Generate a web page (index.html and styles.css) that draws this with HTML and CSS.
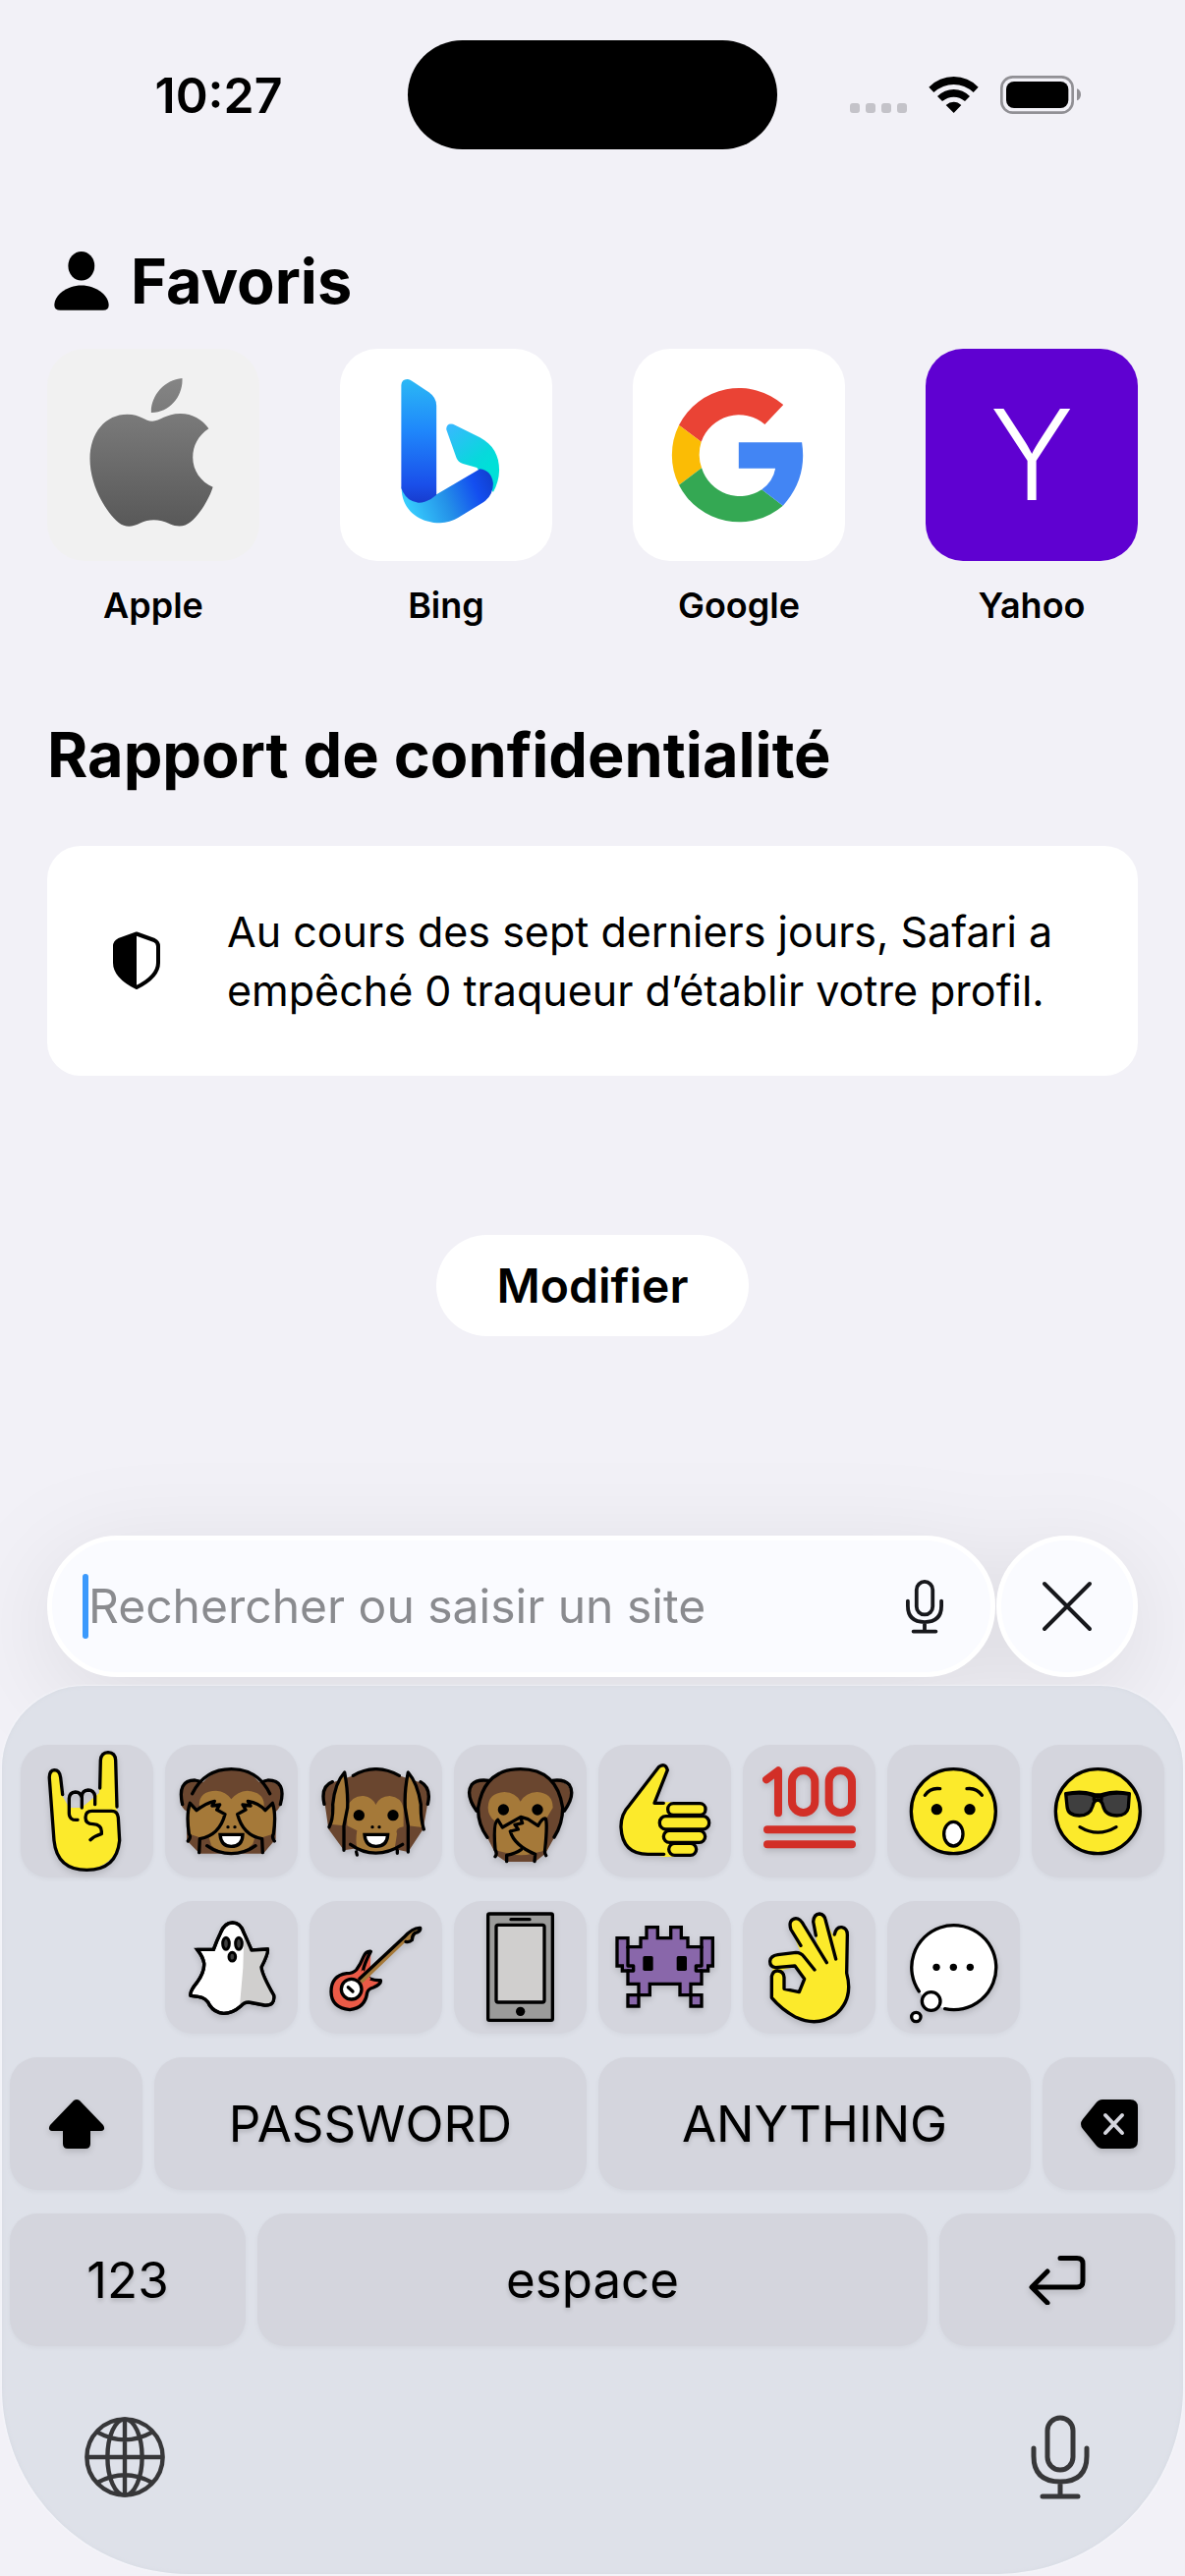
FILE: index.html
```html
<!DOCTYPE html>
<html lang="fr">
<head>
<meta charset="utf-8">
<meta name="viewport" content="width=device-width, initial-scale=1">
<title>Page de démarrage</title>
<link rel="stylesheet" href="styles.css">
</head>
<body>
<header class="status">
  <time class="status-time">10:27</time>
  <div class="island"></div>
  <svg class="status-icons" viewBox="45 51 705 123" aria-hidden="true">
    <g fill="#c4c3c9"><rect x="45" y="138" width="30" height="30" rx="9"/><rect x="93" y="138" width="30" height="30" rx="9"/><rect x="141" y="138" width="30" height="30" rx="9"/><rect x="189" y="138" width="30" height="30" rx="9"/></g>
    <path d="M286 89Q318 57 362 57T437 89L422 105Q395 81 362 81T301 105ZM312 117Q334 96 362 96T411 117L396 132Q380 119 362 119T327 132ZM338 144Q349 134 362 134T385 144L362 168Z"/>
    <rect x="508" y="58" width="217" height="109" rx="34" fill="none" stroke="#919095" stroke-width="8"/>
    <rect x="522" y="72" width="190" height="81" rx="24"/>
    <path d="M738 94Q750 98 750 112T738 130Z" fill="#919095"/>
  </svg>
</header>

<main class="start">
  <section>
    <h1 class="title"><svg class="person" viewBox="47 32 167 180" aria-hidden="true"><ellipse cx="130" cy="76" rx="40" ry="44"/><path d="M66 210Q48 210 48 195C48 165 85 135 130 135S213 165 213 195Q213 210 196 210Z"/></svg>Favoris</h1>
    <nav class="favorites">
      <a class="favorite" href="#apple">
        <svg class="tile tile-apple" viewBox="126 44 561 648" preserveAspectRatio="none" aria-hidden="true">
          <defs><linearGradient id="gray" x1="0" y1="134" x2="0" y2="588" gradientUnits="userSpaceOnUse"><stop offset="0" stop-color="#858585"/><stop offset="1" stop-color="#585858"/></linearGradient></defs>
          <path fill="url(#gray)" d="M401 239C399 190 435 138 483 134C486 188 450 240 401 239ZM404 265C424 265 440 242 478 242C510 242 537 260 553 288C525 310 511 340 511 376C511 415 532 450 564 466C555 500 530 550 505 573C490 588 470 589 450 579C425 564 395 563 373 576C350 590 332 590 315 575C275 535 239 455 239 380C239 300 280 244 338 244C372 244 385 265 404 265Z"/>
        </svg>
        <span>Apple</span>
      </a>
      <a class="favorite" href="#bing">
        <svg class="tile tile-white" viewBox="900 44 561 648" preserveAspectRatio="none" aria-hidden="true">
          <defs>
            <linearGradient id="bar" x1="0" y1="137" x2="0" y2="513" gradientUnits="userSpaceOnUse"><stop offset="0" stop-color="#2bb8f5"/><stop offset=".42" stop-color="#1f87fb"/><stop offset=".85" stop-color="#1a50ea"/><stop offset="1" stop-color="#173ccf"/></linearGradient>
            <linearGradient id="low" x1="1070" y1="530" x2="1305" y2="450" gradientUnits="userSpaceOnUse"><stop offset="0" stop-color="#38d2ff"/><stop offset=".45" stop-color="#2490e8"/><stop offset=".8" stop-color="#134ef0"/><stop offset="1" stop-color="#1140d0"/></linearGradient>
            <linearGradient id="cyan" x1="1185" y1="280" x2="1300" y2="400" gradientUnits="userSpaceOnUse"><stop offset="0" stop-color="#38b8ff"/><stop offset=".75" stop-color="#08d8dc"/><stop offset="1" stop-color="#00e0d8"/></linearGradient>
          </defs>
          <path fill="url(#cyan)" d="M1181 290Q1181 270 1199 274L1270 315C1305 337 1321 370 1321 415Q1320 450 1305 482L1262 407L1225 395Q1212 390 1208 378Z"/>
          <path fill="url(#low)" d="M1063 465C1060 530 1105 576 1165 576Q1190 575 1212 560L1280 512Q1305 492 1305 455Q1300 415 1270 411L1153 490Z"/>
          <path fill="url(#bar)" d="M1062 155Q1063 136 1079 137Q1084 138 1090 142L1135 177Q1155 193 1155 218V490Q1130 515 1107 514Q1075 510 1062 470Z"/>
        </svg>
        <span>Bing</span>
      </a>
      <a class="favorite" href="#google">
        <svg class="tile tile-white" viewBox="107 44 561 648" preserveAspectRatio="none" aria-hidden="true">
          <path fill="#ea4335" d="M229 277A178 206 0 0 1 505 215L456 275A106 124 0 0 0 288 328Z"/>
          <path fill="#fbbc05" d="M229 277A178 206 0 0 0 229 460L289 408A106 124 0 0 1 288 328Z"/>
          <path fill="#34a853" d="M229 460A178 206 0 0 0 504 523L448 474A106 124 0 0 1 289 408Z"/>
          <path fill="#4285f4" d="M387 330H554Q569 440 504 523L448 474Q478 448 484 409H387Z"/>
        </svg>
        <span>Google</span>
      </a>
      <a class="favorite" href="#yahoo">
        <b class="tile tile-yahoo" aria-hidden="true">Y</b>
        <span>Yahoo</span>
      </a>
    </nav>
  </section>

  <section class="privacy">
    <h2 class="title">Rapport de confidentialité</h2>
    <div class="card">
      <svg class="shield" viewBox="0 0 48 60" aria-hidden="true"><path d="M24 2.500L42 9Q46 11 46 15V32Q46 46 24 57Q2 46 2 32V15Q2 11 6 9Z" fill="none" stroke="#000" stroke-width="4" stroke-linejoin="round"/><path d="M24 2L6 9Q2 11 2 15V32Q2 46 24 57Z"/></svg>
      <p>Au cours des sept derniers jours, Safari a empêché 0 traqueur d’établir votre profil.</p>
    </div>
  </section>

  <button class="edit" type="button">Modifier</button>
</main>

<form class="urlbar">
  <div class="field">
    <span class="caret"></span>
    <input class="search" type="text" placeholder="Rechercher ou saisir un site" aria-label="Rechercher ou saisir un site">
    <button class="plain" type="button" aria-label="Dictée">
      <svg class="mic-small" viewBox="0 0 60 86" aria-hidden="true"><use href="#mic"/></svg>
    </button>
  </div>
  <button class="close" type="button" aria-label="Fermer">
    <svg viewBox="0 0 52 52" aria-hidden="true"><path d="M3 3L49 49M49 3L3 49" fill="none" stroke="#17181c" stroke-width="4" stroke-linecap="round"/></svg>
  </button>
</form>

<section class="keyboard" aria-label="Clavier">
  <div class="row row-emoji">
    <button class="key" type="button" aria-label="Cornes"><svg viewBox="64 108 405 405"><path class="y" d="M152 200L166 400Q175 490 266 490Q350 480 366 400L362 320L355 300V150Q352 130 331 131Q310 132 308 155L304 255L250 300L212 300L190 262L185 205Q180 185 167 185Q150 187 152 200Z"/><path class="l" d="M192 260L186 208Q183 185 167 185Q150 187 152 212L166 400Q175 490 266 490T366 400L362 330Q360 310 342 310H282Q262 310 262 330T285 350Q311 352 311 372V380Q290 386 277 398M306 240L308 155Q310 132 331 131Q353 132 354 155L358 297M291 290V265Q288 246 270 246Q252 247 251 265V300V270Q247 252 231 252Q213 253 212 272V318Q213 340 238 337"/></svg></button>
    <button class="key" type="button" aria-label="Singe qui ne voit rien"><svg viewBox="504 108 405 405"><path class="d" d="M549 270Q548 216 595 216Q612 216 620 222Q655 182 706 182T792 222Q862 208 862 270Q857 300 842 312V395L804 440H610L570 400L572 312Q550 300 549 270Z"/><path class="t" d="M608 290Q610 248 660 248Q690 250 706 274Q725 250 755 248Q805 252 806 290V300L772 410Q745 438 706 438Q665 435 645 415Z"/><path class="t" d="M578 288L600 306L655 280L688 320Q670 385 615 392L578 380Q568 330 578 288ZM834 288L810 306L757 280L724 320Q742 385 795 392L834 380Q844 330 834 288Z"/><path class="l" d="M587 257Q625 182 706 182T824 257M557 290Q540 216 595 216L608 219M856 290Q876 216 818 216L806 219M632 416Q665 440 706 440T780 416M574 402Q585 390 577 380Q568 320 580 286L600 308Q630 285 655 280L648 294L671 291L662 306L687 320Q670 385 610 395L608 437M838 402Q829 390 835 380Q844 320 832 286L810 308Q790 285 757 280L765 294L741 291L750 306L725 320Q742 385 800 395L802 437"/><path class="w" d="M672 382H741Q740 418 706 418Q675 418 672 382Z"/><circle cx="696" cy="359" r="5"/><circle cx="717" cy="359" r="5"/></svg></button>
    <button class="key" type="button" aria-label="Singe qui n’entend rien"><svg viewBox="945 108 405 405"><path class="d" d="M990 275Q985 230 1025 220L1080 202Q1145 162 1218 202L1280 222Q1312 240 1306 285L1292 365L1246 435L1200 425H1080L1050 430L1003 365Z"/><path class="t" d="M1060 355L1058 300Q1075 262 1110 264Q1138 268 1147 291Q1158 266 1190 264Q1225 268 1232 300V358Q1205 362 1212 380L1205 425Q1150 450 1090 425Q1085 400 1090 370ZM1052 192Q1022 220 1012 300L1006 350L1050 355L1064 300ZM1246 192Q1275 220 1286 300L1290 360L1246 355L1237 300Z"/><path class="l" d="M1078 202Q1147 162 1219 202M1015 221Q978 235 990 289M1284 221Q1318 240 1306 289M1005 359Q1018 335 1016 290Q1022 225 1052 192Q1063 250 1061 300L1050 355V430M1294 366Q1284 335 1285 290Q1275 225 1246 192Q1234 250 1237 300L1246 355V435M1070 412Q1145 465 1229 412M1088 435L1090 444M1213 430V439"/><path class="w" d="M1113 382H1184Q1182 418 1148 418Q1116 418 1113 382Z"/><circle cx="1096" cy="323" r="17"/><circle cx="1200" cy="323" r="17"/><circle cx="1137" cy="359" r="5"/><circle cx="1158" cy="359" r="5"/></svg></button>
    <button class="key" type="button" aria-label="Singe qui ne dit rien"><svg viewBox="36 108 405 405"><path class="d" d="M83 270Q80 212 145 219Q180 182 239 182T332 219Q395 212 395 270Q386 305 369 315Q365 360 340 395L315 440L284 465H195L165 445L140 395Q112 360 108 310Q84 300 83 270Z"/><path class="t" d="M140 300Q140 255 190 252Q225 254 239 281Q255 254 290 252Q338 255 338 300L320 330L320 430L275 440Q240 450 205 440L162 430L160 340Q140 325 140 300Z"/><path class="l" d="M138 391Q108 350 110 300Q128 182 239 182T368 300Q368 350 342 390M105 310Q70 260 90 230Q105 212 142 217M373 310Q408 260 388 230Q372 212 336 217M162 449Q169 440 162 428Q155 345 170 337L184 360Q210 345 240 328L262 335L293 355Q306 330 316 333Q322 350 314 428Q312 438 317 446M197 464V445Q225 440 241 428M208 372Q220 415 284 442L282 464M208 372L232 366L222 352L245 347L240 332"/><circle cx="187" cy="306" r="17"/><circle cx="291" cy="306" r="17"/></svg></button>
    <button class="key" type="button" aria-label="Pouce levé"><svg viewBox="477 108 405 405"><path class="y" d="M662 175L572 292Q545 320 546 360Q550 442 628 442L680 450H720L700 283H648L688 185Q680 162 662 175Z"/><path class="l" d="M676 286H648L688 185Q682 162 662 175L572 292Q545 320 546 360Q550 442 628 442H677"/><g class="l f"><rect x="689" y="287" width="115" height="35" rx="17"/><rect x="664" y="326" width="151" height="40" rx="19"/><rect x="676" y="370" width="127" height="36" rx="18"/><rect x="692" y="409" width="84" height="36" rx="18"/></g></svg></button>
    <button class="key" type="button" aria-label="Cent points"><svg viewBox="918 108 405 405"><path fill="none" stroke="#d22f27" stroke-width="24" stroke-linecap="round" stroke-linejoin="round" d="M990 214L1026 187V316M993 367H1251M993 412H1251"/><g fill="none" stroke="#d22f27" stroke-width="24"><rect x="1068" y="187" width="70" height="128" rx="34"/><rect x="1181" y="187" width="70" height="128" rx="34"/></g></svg></button>
    <button class="key" type="button" aria-label="Visage étonné"><svg viewBox="160 108 405 405"><circle class="l y" cx="362" cy="311" r="129"/><path class="l" d="M275 262Q291 238 321 242M403 242Q432 238 449 262"/><ellipse class="l w" cx="362" cy="380" rx="29" ry="37"/><circle cx="311" cy="305" r="17"/><circle cx="412" cy="305" r="17"/></svg></button>
    <button class="key" type="button" aria-label="Lunettes de soleil"><svg viewBox="600 108 405 405"><circle class="l y" cx="802" cy="311" r="129"/><path class="l lens" d="M704 257Q750 247 785 258Q802 264 820 258Q855 247 898 257L895 300Q890 324 860 324Q825 324 818 295Q814 277 802 276Q790 277 786 295Q778 324 745 324Q710 324 708 296Z"/><path class="l" d="M708 258Q765 250 795 266H810Q845 250 896 258M790 268V276M813 268V276M747 359Q802 392 858 359"/></svg></button>
  </div>
  <div class="row row-emoji">
    <button class="key" type="button" aria-label="Fantôme"><svg viewBox="504 585 405 405"><path class="w" d="M602 733L652 733Q662 705 673 683Q685 651 710 651T745 683Q755 705 768 735L817 732Q820 745 798 787Q800 810 836 873Q840 905 808 903Q785 899 760 894Q745 893 735 906Q710 928 683 928Q655 926 640 903Q630 880 605 877L582 874Q578 862 602 833Q625 800 623 775Q620 755 602 733Z"/><path class="light" d="M745 690L768 735L817 732L798 787L836 873Q840 905 808 903L760 894L732 904L742 790Z"/><path class="l" d="M602 733L652 733Q662 705 673 683Q685 651 710 651T745 683Q755 705 768 735L817 732Q820 745 798 787Q800 810 836 873Q840 905 808 903Q785 899 760 894Q745 893 735 906Q710 928 683 928Q655 926 640 903Q630 880 605 877L582 874Q578 862 602 833Q625 800 623 775Q620 755 602 733Z"/><g stroke="#000" stroke-width="9" fill="#3f3f3f"><ellipse cx="690" cy="715" rx="10" ry="18"/><ellipse cx="729" cy="715" rx="10" ry="18"/><ellipse cx="709" cy="755" rx="10" ry="13"/></g></svg></button>
    <button class="key" type="button" aria-label="Guitare"><svg viewBox="945 585 405 405"><path class="l red" d="M1132 739Q1118 737 1110 755Q1100 780 1088 795Q1078 806 1058 806Q1011 813 1011 862T1068 917Q1115 912 1121 865Q1124 853 1140 849Q1165 838 1162 827Q1145 828 1130 822M1132 739Q1112 775 1108 800"/><path class="red" d="M1108 795L1132 822L1110 850L1085 815Z"/><path class="t" d="M1094 822L1235 690L1260 670L1285 668L1260 700L1240 708L1106 836Z"/><path class="l" d="M1098 822L1232 697Q1260 665 1283 667Q1286 678 1266 683Q1258 690 1258 704Q1250 712 1239 709"/><circle class="l w" cx="1073" cy="854" r="31"/><path class="l" d="M1063 848L1077 861"/></svg></button>
    <button class="key" type="button" aria-label="Téléphone"><svg viewBox="36 585 405 405"><rect class="l metal" x="140" y="624" width="197" height="325" rx="4"/><rect class="l light" x="165" y="658" width="147" height="236" rx="6"/><path class="l" d="M210 641H267"/><circle cx="239" cy="922" r="14"/></svg></button>
    <button class="key" type="button" aria-label="Monstre de l’espace"><svg viewBox="477 585 405 405"><path class="l p" d="M624 665H658V698H698V665H730V698H750V725H792V698H826V783H812V798H792V838H759V872H726V838H634V872H600V838H567V798H550V783H534V698H567V725H606V698H624Z"/><path class="l p" d="M567 872H600V906H567ZM759 872H792V906H759Z"/><path class="l" d="M567 725V783H584V798H567M792 725V783H775V798H792"/><rect x="613" y="753" width="31" height="45" rx="5"/><rect x="716" y="753" width="31" height="45" rx="5"/></svg></button>
    <button class="key" type="button" aria-label="Signe OK"><svg viewBox="918 585 405 405"><path class="y" fill-rule="evenodd" d="M1066 672Q1056 640 1080 638Q1095 638 1105 660L1145 720L1133 645Q1140 624 1152 624Q1168 626 1172 645L1193 690Q1200 663 1220 665Q1238 668 1237 690L1235 805Q1255 880 1210 925Q1150 975 1080 940Q1030 910 1008 880L1006 810L1010 793Q995 770 1005 760L1020 750L1095 743ZM1040 795L1045 855L1090 863L1106 823L1077 785Z"/><path class="l" d="M1095 721L1065 672Q1055 642 1080 638Q1093 638 1105 660L1174 773M1141 690L1133 648Q1135 625 1152 624Q1168 626 1171 645L1202 762M1198 687Q1203 663 1220 665Q1238 668 1237 690L1235 805Q1257 885 1200 932Q1145 970 1080 940Q1035 915 1006 880L1006 815Q1010 797 1025 798Q1043 800 1044 818V853L1090 863L1106 823L1077 783L1018 788Q1000 786 1001 768Q1003 752 1025 749L1080 742Q1095 742 1105 755L1137 795"/></svg></button>
    <button class="key" type="button" aria-label="Bulle de pensée"><svg viewBox="160 585 405 405"><circle fill="#fff" cx="362" cy="787" r="129"/><path class="l" d="M257 861A129 129 0 1 1 336 914"/><circle class="l w" cx="294" cy="891" r="28"/><circle class="l w" cx="248" cy="939" r="14"/><circle cx="310" cy="787" r="11"/><circle cx="362" cy="787" r="11"/><circle cx="413" cy="787" r="11"/></svg></button>
  </div>
  <div class="row row-words">
    <button class="key" type="button" aria-label="Majuscule"><svg class="glyph" viewBox="0 0 58 50"><path d="M26 1Q29 -1 32 1L56 26Q59 31 54 32H43V45Q43 50 38 50H20Q15 50 15 45V32H4Q-1 31 2 26Z"/></svg></button>
    <button class="key" type="button">PASSWORD</button>
    <button class="key" type="button">ANYTHING</button>
    <button class="key" type="button" aria-label="Effacer"><svg class="glyph" viewBox="0 0 58 50"><path d="M22 0H50Q58 0 58 8V42Q58 50 50 50H22Q18 50 15 46L2 30Q-2 25 2 20L15 4Q18 0 22 0Z"/><path d="M25 16L42 34M42 16L25 34" stroke="#d4d5dd" stroke-width="4" stroke-linecap="round"/></svg></button>
  </div>
  <div class="row row-space">
    <button class="key" type="button">123</button>
    <button class="key" type="button">espace</button>
    <button class="key" type="button" aria-label="Retour"><svg class="glyph" viewBox="0 0 58 50"><path d="M32 2.500H49Q55 2.500 55 8V26Q55 32 49 32H4M19 16L3 32L19 48" fill="none" stroke="#000" stroke-width="5" stroke-linecap="round" stroke-linejoin="round"/></svg></button>
  </div>
  <div class="tools">
    <button class="plain" type="button" aria-label="Changer de clavier"><svg class="globe" viewBox="202 93 242 242"><g fill="none" stroke="#373739" stroke-width="13"><circle cx="323" cy="214" r="114"/><ellipse cx="323" cy="214" rx="52" ry="114"/><path d="M323 100V328M209 214H437M242 140Q323 184 404 140M242 290Q323 246 404 290"/></g></svg></button>
    <button class="plain" type="button" aria-label="Dictée vocale"><svg class="mic-large" viewBox="0 0 60 86" aria-hidden="true"><g id="mic" fill="none" stroke="currentColor" stroke-linecap="round"><rect x="17" y="3" width="26" height="53" rx="13"/><path d="M3 34V42Q3 68 30 68T57 42V34M30 68V83M12 83H48"/></g></svg></button>
  </div>
</section>
</body>
</html>
```
FILE: styles.css
```css
* { box-sizing: border-box; }

body {
  margin: 0;
  padding-bottom: 2px;
  background: #f2f1f7;
  color: #000;
  font-family: Inter, "Liberation Sans", sans-serif;
  overflow-x: hidden;
}

svg { display: block; }

button, input {
  margin: 0;
  padding: 0;
  border: 0;
  background: none;
  color: inherit;
  font: inherit;
  outline: 0;
}

h1, h2, p { margin: 0; }

/* Status bar */
.status {
  display: grid;
  grid-template-columns: 1fr 376px 1fr;
  align-items: center;
  padding-top: 41px;
}
.status-time {
  padding-left: 30px;
  font-size: 50px;
  font-weight: 600;
  line-height: 60px;
  text-align: center;
}
.island { height: 111px; border-radius: 56px; background: #000; }
.status-icons { width: 235px; margin-left: 74px; }

/* Start page */
.start {
  display: flex;
  flex-direction: column;
  padding: 98px 48px 0;
}
.title {
  display: flex;
  align-items: center;
  gap: 22px;
  font-size: 63px;
  font-weight: 700;
  line-height: 72px;
}
.person { width: 56px; margin-left: 7px; }

.favorites {
  display: flex;
  justify-content: space-between;
  margin-top: 33px;
}
.favorite {
  display: grid;
  gap: 23px;
  color: inherit;
  font-size: 36px;
  font-weight: 600;
  line-height: 44px;
  text-align: center;
  text-decoration: none;
}
.tile { width: 216px; height: 216px; border-radius: 38px; }
.tile-apple { background: #f1f1f1; }
.tile-white { background: #fff; }
.tile-yahoo {
  background: #5f01d1;
  color: #fff;
  font-size: 128px;
  font-weight: 300;
  line-height: 216px;
}

.privacy { margin-top: 94px; }
.card {
  display: flex;
  align-items: center;
  gap: 68px;
  margin-top: 57px;
  padding: 57px 67px;
  border-radius: 34px;
  background: #fff;
  font-size: 43px;
  line-height: 60px;
}
.shield { flex: none; width: 48px; }

.edit {
  align-self: center;
  margin-top: 162px;
  padding: 0 62px;
  border-radius: 52px;
  background: #fff;
  font-size: 48px;
  font-weight: 600;
  line-height: 103px;
}

/* Address bar */
.urlbar {
  display: grid;
  grid-template-columns: 1fr 144px;
  gap: 1px;
  padding: 203px 48px 9px;
  filter: drop-shadow(0 20px 50px rgba(0, 0, 0, .09));
}
.field, .close {
  display: flex;
  align-items: center;
  height: 144px;
  border: 5px solid #fff;
  border-radius: 72px;
  background: #fafbff;
}
.field { padding: 0 48px 0 31px; }
.caret { width: 6px; height: 66px; border-radius: 3px; background: #3b99fc; }
.search { flex: 1; min-width: 0; font-size: 48px; line-height: 66px; }
.search::placeholder { color: #8a8b8f; opacity: 1; }
.close { justify-content: center; }
.close svg { width: 52px; }
.mic-small { width: 38px; color: #17181c; stroke-width: 6px; overflow: visible; }

/* Keyboard */
.keyboard {
  display: grid;
  gap: 24px;
  position: relative;
  margin: 0 2px;
  padding: 60px 8px 0;
  border-radius: 84px 84px 190px 190px;
  background: #dee1e9;
  box-shadow: inset 0 0 4px #d6dae2, 0 0 3px #f8faff;
  font-size: 51px;
}
.row { display: grid; gap: 12px; }
.row-emoji {
  grid-template-columns: repeat(auto-fit, 135px);
  justify-content: center;
}
.row-words { grid-template-columns: 135px 1fr 1fr 135px; }
.row-space { grid-template-columns: 240px 1fr 240px; }
.key {
  display: flex;
  align-items: center;
  justify-content: center;
  height: 135px;
  border-radius: 28px;
  background: #d4d5dd;
  box-shadow: 0 2px 5px rgba(0, 0, 0, .04);
  text-shadow: 0 3px 4px rgba(0, 0, 0, .15);
}
.key svg { width: 100%; filter: drop-shadow(0 3px 3px rgba(0, 0, 0, .15)); }
.key .glyph { width: 58px; }

.tools {
  display: flex;
  align-items: center;
  justify-content: space-between;
  height: 208px;
  padding: 0 87px 30px 76px;
  color: #373739;
}
.globe { width: 82px; }
.mic-large { width: 60px; stroke-width: 5px; }

/* Emoji drawing */
.l {
  fill: none;
  stroke: #000;
  stroke-width: 10px;
  stroke-linecap: round;
  stroke-linejoin: round;
}
.y, .f { fill: #fcea2b; }
.w { fill: #fff; stroke: #000; stroke-width: 10px; }
.d { fill: #6a462f; }
.t { fill: #a57939; }
.p { fill: #8967aa; stroke-linejoin: miter; }
.lens { fill: #3f3f3f; }
.light { fill: #d0cfce; }
.metal { fill: #9b9b9a; }
.red { fill: #ea5a47; }
```
